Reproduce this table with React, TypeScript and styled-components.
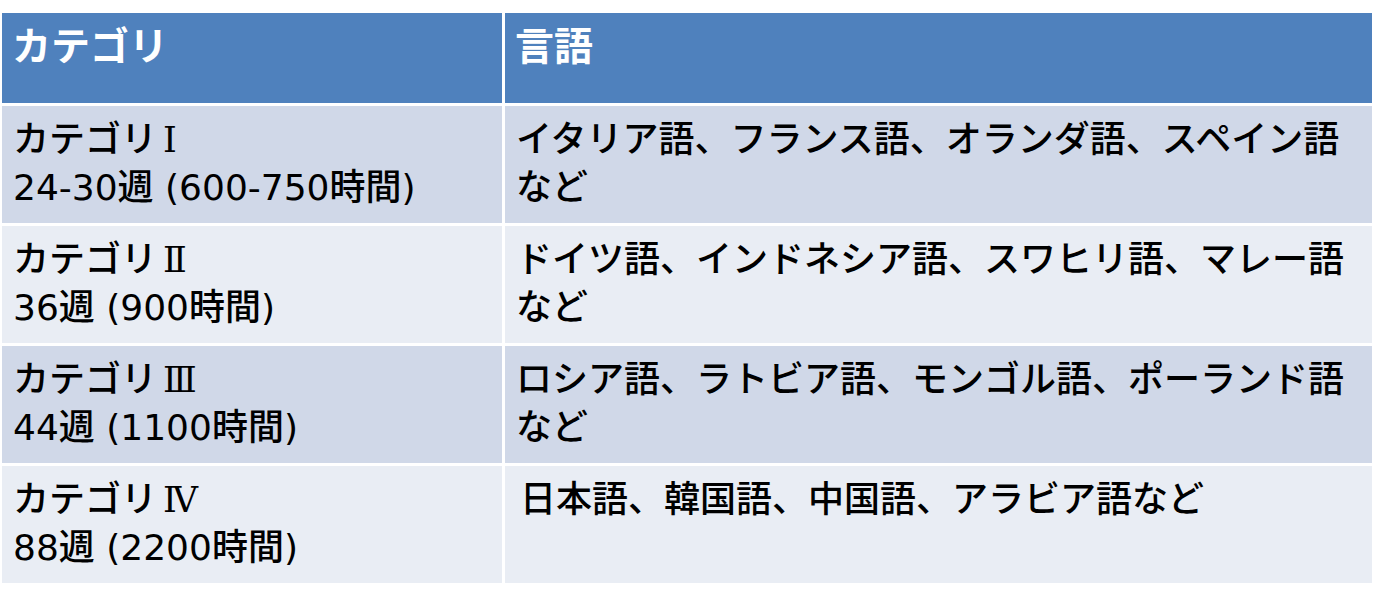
import React from 'react';
import styled, { createGlobalStyle } from 'styled-components';

const rows = [
  { num: 'Ⅰ', time: '24-30週 (600-750時間)', langs: ['イタリア語、フランス語、オランダ語、スペイン語', 'など'] },
  { num: 'Ⅱ', time: '36週 (900時間)', langs: ['ドイツ語、インドネシア語、スワヒリ語、マレー語', 'など'] },
  { num: 'Ⅲ', time: '44週 (1100時間)', langs: ['ロシア語、ラトビア語、モンゴル語、ポーランド語', 'など'] },
  { num: 'Ⅳ', time: '88週 (2200時間)', langs: ['日本語、韓国語、中国語、アラビア語など'] },
];

export default function App() {
  return (
    <>
      <GlobalStyle />
      <Page>
        <Table>
          <HeadCell>カテゴリ</HeadCell>
          <HeadCell>言語</HeadCell>
          {rows.map((r, i) => (
            <React.Fragment key={r.num}>
              <Cell $odd={i % 2 === 0}>
                <Line>
                  カテゴリ
                  <Numeral>{r.num}</Numeral>
                </Line>
                <Line>{r.time}</Line>
              </Cell>
              <Cell $odd={i % 2 === 0} $indent={r.langs.length === 1}>
                {r.langs.map(l => (
                  <Line key={l}>{l}</Line>
                ))}
              </Cell>
            </React.Fragment>
          ))}
        </Table>
      </Page>
    </>
  );
}

const GlobalStyle = createGlobalStyle`
  body {
    margin: 0;
    background: #ffffff;
    font-family: 'DejaVu Sans', 'Noto Sans CJK JP', sans-serif;
  }
`;

const Page = styled.div`
  padding: 13px 0 0 2px;
`;

const Table = styled.div`
  width: 1370px;
  display: grid;
  grid-template-columns: 500px 1fr;
  grid-template-rows: 90px repeat(4, 117px);
  gap: 3px;
  background: #ffffff;
`;

const HeadCell = styled.div`
  background: #4f81bd;
  color: #ffffff;
  font-size: 39px;
  line-height: 48px;
  font-weight: 700;
  padding: 6px 10px;
  font-family: 'Noto Sans CJK JP', sans-serif;
`;

const Cell = styled.div<{ $odd: boolean; $indent?: boolean }>`
  background: ${p => (p.$odd ? '#d0d8e8' : '#e9edf4')};
  color: #000000;
  font-size: 36px;
  line-height: 48px;
  font-weight: 500;
  padding: 10px 12px 0 ${p => (p.$indent ? '15px' : '11px')};
`;

const Line = styled.div`
  white-space: pre;
`;

const Numeral = styled.span`
  font-family: 'DejaVu Serif', 'Liberation Serif', serif;
  font-size: 35px;
  font-weight: 400;
  margin-left: 6px;
`;
